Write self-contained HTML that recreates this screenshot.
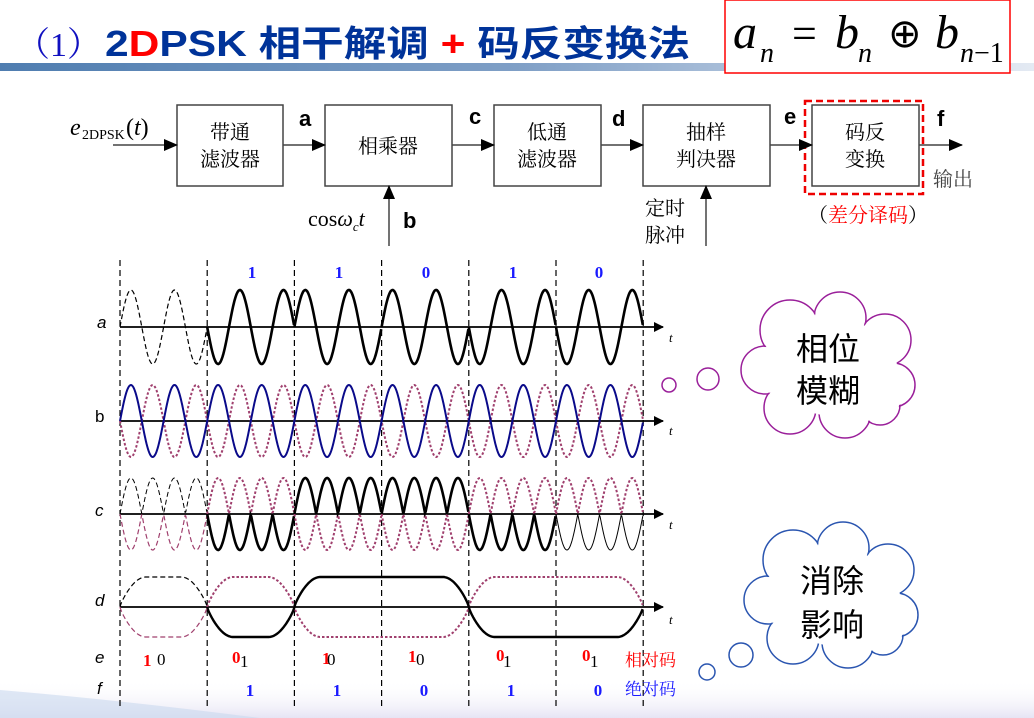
<!DOCTYPE html>
<html><head><meta charset="utf-8"><style>
html,body{margin:0;padding:0;background:#fff;}
svg{display:block;}
.cn{font-family:"Liberation Serif","Noto Serif CJK SC",serif;}
.sans{font-family:"Liberation Sans","Noto Sans CJK SC",sans-serif;}
</style></head><body>
<svg id="s" width="1034" height="718" viewBox="0 0 1034 718" xmlns="http://www.w3.org/2000/svg">
<defs>
<linearGradient id="bar" x1="0" x2="1" y1="0" y2="0">
<stop offset="0" stop-color="#4f7db0"/><stop offset="0.5" stop-color="#7f9fc6"/><stop offset="1" stop-color="#e4eaf3"/>
</linearGradient>
<linearGradient id="bot" x1="0" x2="0" y1="0" y2="1">
<stop offset="0" stop-color="#fff" stop-opacity="0"/><stop offset="1" stop-color="#e6e4f4"/>
</linearGradient>
<marker id="ar" markerWidth="10" markerHeight="10" refX="9" refY="5" orient="auto" markerUnits="userSpaceOnUse">
<path d="M0,0 L10,5 L0,10 z" fill="#000"/></marker>
<marker id="ar2" markerWidth="14" markerHeight="12" refX="13" refY="6" orient="auto" markerUnits="userSpaceOnUse">
<path d="M0,0 L14,6 L0,12 z" fill="#000"/></marker>
</defs>
<rect x="0" y="680" width="1034" height="38" fill="url(#bot)"/>
<path d="M0,690 L0,718 L260,718 Q120,700 0,690z" fill="#c9d8ee" opacity="0.6"/>

<!-- title -->
<text x="16" y="56" font-size="34" fill="#1010c0" class="cn">（1）</text>
<text x="105" y="56" font-size="36" font-weight="bold" fill="#003399" class="sans" textLength="585" lengthAdjust="spacingAndGlyphs">2<tspan fill="#ff0000">D</tspan>PSK 相干解调 <tspan fill="#ff0000">+</tspan> 码反变换法</text>
<rect x="0" y="63" width="1034" height="8" fill="url(#bar)"/>
<rect x="725" y="0" width="285" height="73" fill="#fff" stroke="#ff0000" stroke-width="1.5"/>
<g font-family="Liberation Serif,serif" font-style="italic" fill="#000">
<text x="733" y="48" font-size="48">a</text><text x="760" y="62" font-size="28">n</text>
<text x="792" y="48" font-size="44" font-style="normal">=</text>
<text x="835" y="48" font-size="48">b</text><text x="858" y="62" font-size="28">n</text>
<text x="888" y="47" font-size="40" font-style="normal">⊕</text>
<text x="935" y="48" font-size="48">b</text><text x="960" y="62" font-size="28">n<tspan font-style="normal">−1</tspan></text>
</g>

<!-- block diagram -->
<g stroke="#444" stroke-width="1.5" fill="#fff">
<rect x="177" y="105" width="106" height="81"/>
<rect x="325" y="105" width="127" height="81"/>
<rect x="494" y="105" width="107" height="81"/>
<rect x="643" y="105" width="127" height="81"/>
<rect x="812" y="105" width="107" height="81"/>
</g>
<rect x="805" y="101" width="118" height="93" fill="none" stroke="#e00" stroke-width="2.5" stroke-dasharray="7,4"/>
<g stroke="#444" stroke-width="1.5" marker-end="url(#ar2)">
<line x1="113" y1="145" x2="177" y2="145"/>
<line x1="283" y1="145" x2="325" y2="145"/>
<line x1="452" y1="145" x2="494" y2="145"/>
<line x1="601" y1="145" x2="643" y2="145"/>
<line x1="770" y1="145" x2="812" y2="145"/>
<line x1="919" y1="145" x2="962" y2="145"/>
<line x1="389" y1="246" x2="389" y2="186"/>
<line x1="706" y1="246" x2="706" y2="186"/>
</g>
<g class="cn" font-size="20" fill="#000" text-anchor="middle">
<text x="230" y="139">带通</text><text x="230" y="166">滤波器</text>
<text x="388" y="153">相乘器</text>
<text x="547" y="139">低通</text><text x="547" y="166">滤波器</text>
<text x="706" y="139">抽样</text><text x="706" y="166">判决器</text>
<text x="865" y="139">码反</text><text x="865" y="166">变换</text>
</g>
<g class="cn" font-size="20" fill="#000">
<text x="645" y="215">定时</text><text x="645" y="242">脉冲</text>
<text x="933" y="186" fill="#444">输出</text>
<text x="808" y="222">（<tspan fill="#ff0000">差分译码</tspan>）</text>
</g>
<g font-family="Liberation Serif,serif" fill="#000">
<text x="70" y="135" font-size="24" font-style="italic">e</text>
<text x="82" y="139" font-size="14">2DPSK</text>
<text x="126" y="135" font-size="24">(<tspan font-style="italic">t</tspan>)</text>
<text x="308" y="226" font-size="22">cos<tspan font-style="italic">ω</tspan><tspan font-size="13" font-style="italic" dy="5">c</tspan><tspan font-style="italic" dy="-5">t</tspan></text>
</g>
<g class="sans" font-size="22" font-weight="bold" fill="#000">
<text x="299" y="126">a</text><text x="469" y="124">c</text><text x="612" y="126">d</text>
<text x="784" y="124">e</text><text x="937" y="126">f</text><text x="403" y="228">b</text>
</g>

<!-- waveform axes & labels -->
<g id="waves"></g>
<g class="sans" font-size="17" font-style="italic" fill="#000">
<text x="97" y="328">a</text><text x="95" y="516">c</text><text x="95" y="606">d</text>
<text x="95" y="663">e</text><text x="97" y="694">f</text>
</g>
<text x="95" y="422" font-size="17" fill="#000" font-family="Liberation Sans,sans-serif">b</text>
<g font-family="Liberation Serif,serif" font-style="italic" font-size="13" fill="#000">
<text x="669" y="342">t</text><text x="669" y="435">t</text><text x="669" y="529">t</text><text x="669" y="624">t</text>
</g>
<g font-family="Liberation Serif,serif" font-weight="bold" font-size="17" fill="#1a1aff" text-anchor="middle">
<text x="252" y="278">1</text><text x="339" y="278">1</text><text x="426" y="278">0</text><text x="513" y="278">1</text><text x="599" y="278">0</text>
<text x="250" y="696">1</text><text x="337" y="696">1</text><text x="424" y="696">0</text><text x="511" y="696">1</text><text x="598" y="696">0</text>
</g>
<g font-family="Liberation Serif,serif" font-size="17">
<text x="143" y="666" fill="#ff0000" font-weight="bold">1</text><text x="157" y="665" fill="#000">0</text>
<text x="232" y="663" fill="#ff0000" font-weight="bold">0</text><text x="240" y="667" fill="#000">1</text>
<text x="322" y="664" fill="#ff0000" font-weight="bold">1</text><text x="327" y="665" fill="#000">0</text>
<text x="408" y="662" fill="#ff0000" font-weight="bold">1</text><text x="416" y="665" fill="#000">0</text>
<text x="496" y="661" fill="#ff0000" font-weight="bold">0</text><text x="503" y="667" fill="#000">1</text>
<text x="582" y="661" fill="#ff0000" font-weight="bold">0</text><text x="590" y="667" fill="#000">1</text>
</g>
<g class="cn" font-size="17"><text x="625" y="666" fill="#ff0000">相对码</text><text x="625" y="695" fill="#1a1aff">绝对码</text></g>

<!-- clouds -->
<g fill="none" stroke="#9a1f9a" stroke-width="1.5">
<circle cx="669" cy="385" r="7"/><circle cx="708" cy="379" r="11"/>
<g id="c1s"></g>
</g>
<g fill="none" stroke="#2a55b0" stroke-width="1.5">
<circle cx="707" cy="672" r="8"/><circle cx="741" cy="655" r="12"/>
<g id="c2s"></g>
</g>
<g id="c1f" fill="#fff"></g><g id="c2f" fill="#fff"></g>
<g class="sans" font-size="32" fill="#000" text-anchor="middle">
<text x="828" y="360">相位</text><text x="828" y="402">模糊</text>
<text x="832" y="592">消除</text><text x="832" y="636">影响</text>
</g>
</svg>
<script>
(function(){
var NS="http://www.w3.org/2000/svg",W=document.getElementById("waves");
function el(t,a,p){var e=document.createElementNS(NS,t);for(var k in a)e.setAttribute(k,a[k]);(p||W).appendChild(e);return e;}
var X0=120,T=87.2,ph=[1,-1,1,1,-1,-1];
function path(fn,x1,x2){var d="";for(var x=x1;x<=x2+0.01;x+=0.7){d+=(d?"L":"M")+x.toFixed(1)+","+fn(x).toFixed(1);}return d;}
function S(o,col,w,da){var a={d:o,fill:"none",stroke:col,"stroke-width":w};if(da)a["stroke-dasharray"]=da;el("path",a);}
var MR="#a0406e";
for(var i=0;i<=6;i++){var x=X0+i*T;el("line",{x1:x,y1:260,x2:x,y2:706,stroke:"#000","stroke-width":1.2,"stroke-dasharray":"6,4"});}
[327,421,514,607].forEach(function(y){el("line",{x1:X0,y1:y,x2:663,y2:y,stroke:"#000","stroke-width":1.8,"marker-end":"url(#ar)"});});
for(var i=0;i<6;i++){(function(i){var xs=X0+i*T,s=ph[i];
 var d=path(function(x){return 327-37*s*Math.sin(2*Math.PI*2*(x-xs)/T);},xs,xs+T);
 if(i==0)S(d,"#000",1.2,"5,3");else S(d,"#000",2.6);})(i);}
S(path(function(x){return 421+36*Math.sin(2*Math.PI*2*(x-X0)/T);},X0,X0+6*T),MR,2,"2.5,2");
S(path(function(x){return 421-36*Math.sin(2*Math.PI*2*(x-X0)/T);},X0,X0+6*T),"#0a0a8a",2);
for(var i=0;i<6;i++){(function(i){var xs=X0+i*T,s=ph[i];
 var f=function(x){return Math.abs(Math.sin(2*Math.PI*2*(x-xs)/T));};
 var dn=path(function(x){return 514+36*s*f(x);},xs,xs+T),dp=path(function(x){return 514-36*s*f(x);},xs,xs+T);
 if(i==0){S(dn,MR,1.2,"5,3");S(dp,"#000",1,"5,3");}
 else{S(dn,MR,2,"2.5,2");S(dp,"#000",i==5?1:2.6);}})(i);}
var ws=26;
function L(x){var i=Math.min(5,Math.floor((x-X0)/T));var s=ph[i];var xs=X0+i*T,xe=xs+T;
 var f=1;var prevChange=(i==0)||ph[i-1]!=s, nextChange=(i==5)||ph[i+1]!=s;
 if(prevChange&&x-xs<ws)f=Math.min(f,Math.sin(Math.PI/2*(x-xs)/ws));
 if(nextChange&&xe-x<ws)f=Math.min(f,Math.sin(Math.PI/2*(xe-x)/ws));
 return s*Math.pow(Math.max(f,0),0.8);}
S(path(function(x){return 607+30*L(x);},X0+T,X0+6*T),MR,2,"2.5,2");
S(path(function(x){return 607-30*L(x);},X0+T,X0+6*T),"#000",2.4);
S(path(function(x){return 607+30*L(x);},X0,X0+T),MR,1.2,"5,3");
S(path(function(x){return 607-30*L(x);},X0,X0+T),"#000",1.2,"5,3");
function cloud(cs,ctr,sid,fid){var sg=document.getElementById(sid),fg=document.getElementById(fid);
 cs.forEach(function(c){el("circle",{cx:c[0],cy:c[1],r:c[2]},sg);});
 cs.forEach(function(c){el("circle",{cx:c[0],cy:c[1],r:c[2]-1},fg);});
 el("ellipse",{cx:ctr[0],cy:ctr[1],rx:62,ry:48},fg);}
var c1=[[790,330,30],[840,318,26],[885,340,26],[765,370,24],[893,385,22],[790,408,26],[845,412,26],[880,405,20]];
var c2=c1.map(function(c){return [c[0]+3,c[1]+230,c[2]];});
cloud(c1,[835,368],"c1s","c1f");cloud(c2,[838,598],"c2s","c2f");
})();
</script>
</body></html>
